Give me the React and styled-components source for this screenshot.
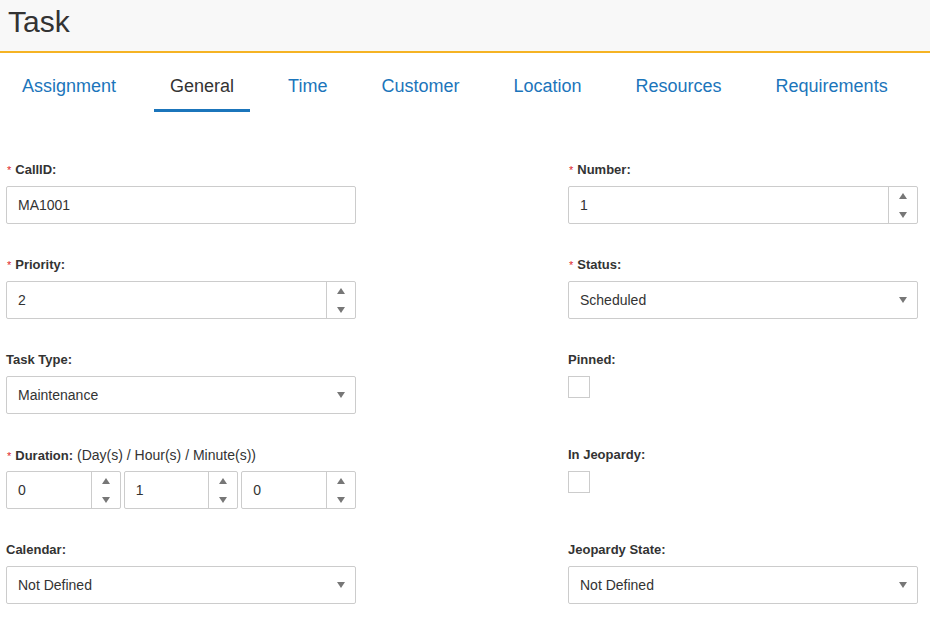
import styled, { createGlobalStyle } from "styled-components";

const GlobalStyle = createGlobalStyle`
  body {
    margin: 0;
    background: #fff;
    font-family: "Liberation Sans", Arial, sans-serif;
    color: #333;
  }
`;

const Header = styled.header`
  height: 53px;
  box-sizing: border-box;
  padding: 7px 0 0 8px;
  background-color: #f8f8f8;
  border-bottom: 2px solid #f5b324;
  font-size: 30px;
  line-height: 30px;
  color: #333;
`;

const TabBar = styled.nav`
  display: flex;
  gap: 22px;
  padding: 13px 0 0 6px;
`;

const Tab = styled.div`
  padding: 10px 16px 13px;
  font-size: 18px;
  line-height: 20px;
  color: ${(p) => (p.$active ? "#333" : "#1b75bb")};
  border-bottom: 3px solid ${(p) => (p.$active ? "#1b75bb" : "transparent")};
  cursor: pointer;
`;

const Form = styled.form`
  display: grid;
  grid-template-columns: 350px 350px;
  column-gap: 212px;
  row-gap: 33px;
  padding: 50px 0 0 6px;
`;

const Field = styled.div`
  display: flex;
  flex-direction: column;
`;

const Label = styled.label`
  display: block;
  height: 16px;
  margin-bottom: 8px;
  font-size: 13px;
  line-height: 16px;
  font-weight: bold;
  color: #333;
  white-space: nowrap;
`;

const Required = styled.span`
  color: #e0262b;
  font-size: 11px;
  font-weight: normal;
  margin: 0 4px 0 1px;
`;

const Hint = styled.span`
  font-weight: normal;
  font-size: 14px;
  margin-left: 4px;
`;

const Box = styled.div`
  display: flex;
  align-items: stretch;
  height: 38px;
  box-sizing: border-box;
  border: 1px solid #ccc;
  border-radius: 2px;
  background: #fff;
  font-size: 14px;
  color: #333;
`;

const Value = styled.div`
  flex: 1;
  display: flex;
  align-items: center;
  padding-left: 11px;
`;

const Spinner = styled.div`
  width: 28px;
  border-left: 1px solid #ccc;
  display: flex;
  flex-direction: column;
  align-items: center;
  justify-content: center;
  gap: 13px;
`;

const Caret = styled.div`
  width: 28px;
  display: flex;
  align-items: center;
  justify-content: center;
`;

const Triple = styled.div`
  display: grid;
  grid-template-columns: repeat(3, 1fr);
  gap: 3px;
`;

const Check = styled.div`
  width: 22px;
  height: 22px;
  box-sizing: border-box;
  border: 1px solid #ccc;
  background: #fff;
`;

const Up = () => (
  <svg width="8" height="6" viewBox="0 0 8 6">
    <path d="M4 0 L8 6 L0 6 Z" fill="#777" />
  </svg>
);

const Down = () => (
  <svg width="8" height="6" viewBox="0 0 8 6">
    <path d="M0 0 L8 0 L4 6 Z" fill="#777" />
  </svg>
);

function TextBox({ value }) {
  return (
    <Box>
      <Value>{value}</Value>
    </Box>
  );
}

function NumberBox({ value }) {
  return (
    <Box>
      <Value>{value}</Value>
      <Spinner>
        <Up />
        <Down />
      </Spinner>
    </Box>
  );
}

function SelectBox({ value }) {
  return (
    <Box>
      <Value>{value}</Value>
      <Caret>
        <Down />
      </Caret>
    </Box>
  );
}

function FieldLabel({ required, children, hint }) {
  return (
    <Label>
      {required && <Required>*</Required>}
      {children}
      {hint && <Hint>{hint}</Hint>}
    </Label>
  );
}

const tabs = [
  "Assignment",
  "General",
  "Time",
  "Customer",
  "Location",
  "Resources",
  "Requirements",
];

export default function App() {
  return (
    <>
      <GlobalStyle />
      <Header>Task</Header>
      <TabBar>
        {tabs.map((t) => (
          <Tab key={t} $active={t === "General"}>
            {t}
          </Tab>
        ))}
      </TabBar>
      <Form>
        <Field>
          <FieldLabel required>CallID:</FieldLabel>
          <TextBox value="MA1001" />
        </Field>
        <Field>
          <FieldLabel required>Number:</FieldLabel>
          <NumberBox value="1" />
        </Field>
        <Field>
          <FieldLabel required>Priority:</FieldLabel>
          <NumberBox value="2" />
        </Field>
        <Field>
          <FieldLabel required>Status:</FieldLabel>
          <SelectBox value="Scheduled" />
        </Field>
        <Field>
          <FieldLabel>Task Type:</FieldLabel>
          <SelectBox value="Maintenance" />
        </Field>
        <Field>
          <FieldLabel>Pinned:</FieldLabel>
          <Check />
        </Field>
        <Field>
          <FieldLabel required hint="(Day(s) / Hour(s) / Minute(s))">
            Duration:
          </FieldLabel>
          <Triple>
            <NumberBox value="0" />
            <NumberBox value="1" />
            <NumberBox value="0" />
          </Triple>
        </Field>
        <Field>
          <FieldLabel>In Jeopardy:</FieldLabel>
          <Check />
        </Field>
        <Field>
          <FieldLabel>Calendar:</FieldLabel>
          <SelectBox value="Not Defined" />
        </Field>
        <Field>
          <FieldLabel>Jeopardy State:</FieldLabel>
          <SelectBox value="Not Defined" />
        </Field>
      </Form>
    </>
  );
}
